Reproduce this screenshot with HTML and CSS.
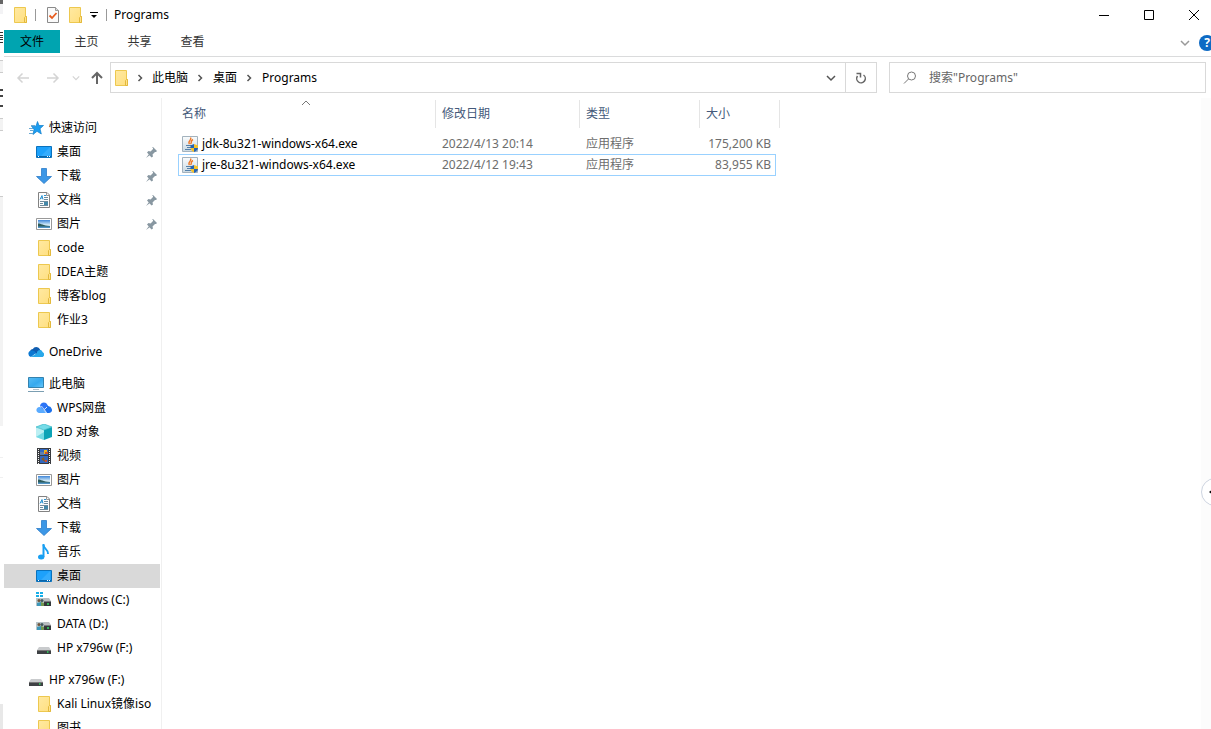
FILE: index.html
```html
<!DOCTYPE html>
<html lang="zh-CN">
<head>
<meta charset="utf-8">
<title>Programs</title>
<link rel="stylesheet" href="styles.css">
</head>
<body>
<svg class="sprite" aria-hidden="true">
  <defs>
    <linearGradient id="g-folder" x1="0" y1="0" x2="1" y2="1"><stop offset="0" stop-color="#ffe9a2"/><stop offset="1" stop-color="#ffdf7f"/></linearGradient>
    <linearGradient id="g-sky" x1="0" y1="0" x2="0" y2="1"><stop offset="0" stop-color="#3f86d8"/><stop offset=".6" stop-color="#d5ecf8"/><stop offset="1" stop-color="#d5ecf8"/></linearGradient>
    <linearGradient id="g-screen" x1="0" y1="0" x2="1" y2="1"><stop offset="0" stop-color="#58bdf5"/><stop offset=".55" stop-color="#35a9ee"/><stop offset="1" stop-color="#67c8fb"/></linearGradient>
    <linearGradient id="g-tile" x1="0" y1="0" x2="0" y2="1"><stop offset="0" stop-color="#fafcfd"/><stop offset="1" stop-color="#c9d8e2"/></linearGradient>
  </defs>
  <symbol id="i-folder" viewBox="0 0 16 16">
    <path d="M2.500.5h11v9h1v6h-12z" fill="url(#g-folder)" stroke="#edc84f"/>
    <path d="M12.500 15.500v-5l1-1h1v6z" fill="#ffe28b" stroke="#e3b93d"/>
  </symbol>
  <symbol id="i-check" viewBox="0 0 16 16">
    <path d="M2.500.5h8l3 3v12h-11z" fill="#fafafa" stroke="#8a8a8a"/>
    <path d="M10.500.5v3h3" fill="#ddd" stroke="#999"/>
    <path d="M4.500 8.500l2.500 2.500 4.500-5" fill="none" stroke="#e75a1c" stroke-width="1.800"/>
  </symbol>
  <symbol id="i-star" viewBox="0 0 16 16">
    <path d="M9.500 1.500l1.500 4h4.500l-3.500 3.200 1.300 5.300-4.300-2.700L5 14.500l1-5.300-2.500-3H8z" fill="#1c9df0" stroke="#0f7ecb" stroke-width=".7"/>
    <path d="M3 5.500h4M1 8.500h4M2 10.500h3M1 13.500h4" stroke="#6aa9d2"/>
  </symbol>
  <symbol id="i-desktop" viewBox="0 0 16 16">
    <path d="M.5 2.500h15v11H.5z" fill="#1da1fb" stroke="#0a72bd"/>
    <path d="M5 12L14 3v9z" fill="#4bb8ff" opacity=".5"/>
    <path d="M1 12.500h14" stroke="#0a64a8"/>
    <path d="M2 12.500h1M11 12.500h1M13 12.500h1" stroke="#fff"/>
  </symbol>
  <symbol id="i-download" viewBox="0 0 16 16">
    <path d="M5.500.5h5v8h5L8 15.500.500 8.500h5z" fill="#3c97e6" stroke="#2c7cc9" stroke-width=".8"/>
  </symbol>
  <symbol id="i-doc" viewBox="0 0 16 16">
    <path d="M2.500.5h8.500l2.500 2.500v12.500h-11z" fill="#fdfdfd" stroke="#828282"/>
    <path d="M10.500.5v3h3" fill="none" stroke="#999"/>
    <path d="M8 5.500h4M8 7.500h4M4 9.500h8M4 11.500h3M4 13.500h8" stroke="#6f8b9c"/>
    <path d="M4 7.500l2-4 1 4M5 6h2M8 3.500h2" fill="none" stroke="#2a93d2"/>
    <path d="M8 10h4v3H8z" fill="#4388a9"/>
  </symbol>
  <symbol id="i-picture" viewBox="0 0 16 16">
    <path d="M.5 2.500h15v11H.5z" fill="#fff" stroke="#999"/>
    <path d="M2 4h12v8H2z" fill="url(#g-sky)"/>
    <path d="M2 7.500c3 0 5 2 12 2.500v1H2z" fill="#2d5c5c"/>
    <path d="M2 10.500h12V12H2z" fill="#4f93c5"/>
  </symbol>
  <symbol id="i-cloud" viewBox="0 0 16 16">
    <path d="M2 8c0-2 1.500-3 3-3 1-3 6-3 7.500 1.500L9 10z" fill="#0f5db0"/>
    <path d="M3 13a3.200 3.200 0 0 1 0-6.300C5 6 7 7 8 9z" fill="#0b78d2"/>
    <path d="M9 8c1-2 4.500-3 5.500 0 2.500 1 2 5-.5 5H3L9 9z" fill="#28a8ea"/>
  </symbol>
  <symbol id="i-pc" viewBox="0 0 16 16">
    <path d="M.5 1.500h15v10H.5z" fill="url(#g-screen)" stroke="#3482ae"/>
    <path d="M5 13.500h6" stroke="#b4c1c9"/><path d="M0 15.500h16" stroke="#7b9eb2"/>
  </symbol>
  <symbol id="i-wps" viewBox="0 0 16 16">
    <path d="M3 13C-1 12 0 7 3.500 7 6 7 7 9 10 13z" fill="#5aabff"/>
    <path d="M4 6.500c0-4.500 6-5.500 7.500-1.500L13 7l-5 3z" fill="#2c74f6"/>
    <path d="M8 10c2-4 6-5 7.500-1.500C17 11 15 13 13 13h-2z" fill="#1b70ec"/>
    <path d="M4.500 6.500c3 0 4 4 6 6" fill="none" stroke="#d9eaff"/>
    <path d="M8.500 9.500L11 7" stroke="#d9eaff"/>
  </symbol>
  <symbol id="i-cube" viewBox="0 0 16 16">
    <path d="M0 3l8-3 8 3-8 3z" fill="#76dce8"/><path d="M0 3l8 3v10l-8-3z" fill="#bceff3"/><path d="M8 6l8-3v10l-8 3z" fill="#0da3b6"/>
    <path d="M0 13l8-5v8z" fill="#73dae4"/>
    <path d="M0 3l8 3 8-3M0 3l8-3 8 3" fill="none" stroke="#39b8c5" stroke-width=".7"/>
  </symbol>
  <symbol id="i-video" viewBox="0 0 16 16">
    <path d="M1 0h14v16H1z" fill="#393b3f"/><path d="M4 1h8v6H4zM4 8h8v7H4z" fill="#3167c0"/>
    <path d="M4 4h4v3H4z" fill="#5e80ae"/><path d="M8 2h3v4H8z" fill="#e9b71d"/><path d="M5 11l3-2 1 5z" fill="#8b5c20"/><path d="M9 4h3v2H9zM9 12h2v2H9z" fill="#cb4e2e"/>
    <path d="M2.500 1v15M13.500 1v15" stroke="#f5f5f5" stroke-dasharray="1 1"/>
  </symbol>
  <symbol id="i-music" viewBox="0 0 16 16">
    <path d="M7.500 1c0 4 5 4 4.500 9" fill="none" stroke="#189ff2" stroke-width="2"/>
    <path d="M7.500 0v13" stroke="#189ff2" stroke-width="2"/><ellipse cx="5.200" cy="13" rx="3.200" ry="2.500" fill="#189ff2"/>
  </symbol>
  <symbol id="i-drive" viewBox="0 0 16 16">
    <path d="M3 7h10l2 3H1z" fill="#c9cbcd"/><path d="M1 10h14v4H1z" fill="#3e4144"/><path d="M1 10.500h14" stroke="#777"/><path d="M11 12h1.500" stroke="#32df62" stroke-width="1.500"/>
  </symbol>
  <symbol id="i-share-drive" viewBox="0 0 16 16">
    <path d="M6 6h7l2 3v5H8z" fill="#b9bcbf"/><path d="M8 9.500h7v4.500H8z" fill="#34383b"/><path d="M11 12h2" stroke="#32df62" stroke-width="1.500"/>
    <path d="M0 6h8v8H0z" fill="#b8c4c8"/><circle cx="3" cy="8.500" r="1.500" fill="#72563b"/><circle cx="6" cy="8.500" r="1.500" fill="#45585d"/><path d="M1 11l4-1v4H1z" fill="#3d97b9"/><path d="M5 10l3 1v3H5z" fill="#73984e"/>
  </symbol>
  <symbol id="i-windows-drive" viewBox="0 0 16 16">
    <use href="#i-share-drive" width="16" height="16"/><path d="M0 0h3v2H0zM4 0h3v2H4zM0 3h3v2H0zM4 3h3v2H4z" fill="#17aee7"/>
  </symbol>
  <symbol id="i-pin" viewBox="0 0 16 16">
    <path d="M9 3l4 4-1 1h-1l-2.500 2.500.5 2-1.500 1L3 8.500 4.500 7l2 .5L9 5V4l-1-.5zM5 10l1 1-4 3z" fill="#8897a1"/>
  </symbol>
  <symbol id="i-java" viewBox="0 0 16 16">
    <path d="M.5.5h15v15H.5z" fill="url(#g-tile)" stroke="#a3b2bd"/>
    <path d="M8.500 1.500C10.500 4 5 5 7.500 8M11 3.500C8 5 10.500 6 8.500 8" fill="none" stroke="#ee7a2b" stroke-width="1.400"/>
    <path d="M4 9.500h6M5 11.500h4M3 13.500h6" stroke="#5580a8"/>
    <path d="M12 8l4 1.500V12H12zM8.500 12H12v4C10 15 8.500 14 8.500 12z" fill="#f5c32c"/>
    <path d="M12 8v4H8.500V9.500zM12 12h4c0 2-2 3-4 4z" fill="#2463b4"/>
  </symbol>
  <symbol id="i-right" viewBox="0 0 8 8"><path d="M2.500 1l3 3-3 3" fill="none" stroke="currentColor" stroke-width="1.500"/></symbol>
  <symbol id="i-down" viewBox="0 0 10 10"><path d="M1 3l4 4 4-4" fill="none" stroke="currentColor" stroke-width="1.500"/></symbol>
</svg>

<div class="page">
  <div class="backdrop" aria-hidden="true"></div>
  <div class="window">
    <header class="titlebar">
      <svg class="icon"><use href="#i-folder"/></svg>
      <span class="rule"></span>
      <button class="tool" aria-label="属性"><svg class="icon"><use href="#i-check"/></svg></button>
      <button class="tool" aria-label="新建文件夹"><svg class="icon"><use href="#i-folder"/></svg></button>
      <button class="tool more" aria-label="自定义"><svg class="tiny" viewBox="0 0 8 8"><path d="M0 1.500h8" stroke="#000"/><path d="M1 4h6L4 7z"/></svg></button>
      <span class="rule"></span>
      <h1 class="title">Programs</h1>
      <div class="controls">
        <button aria-label="最小化"><svg viewBox="0 0 12 12"><path d="M1 6.500h10"/></svg></button>
        <button aria-label="最大化"><svg viewBox="0 0 12 12"><path d="M1.500 1.500h9v9h-9z"/></svg></button>
        <button aria-label="关闭"><svg viewBox="0 0 12 12"><path d="M1 1l10 10M11 1L1 11"/></svg></button>
      </div>
    </header>

    <nav class="ribbon">
      <button class="tab file">文件</button>
      <button class="tab">主页</button>
      <button class="tab">共享</button>
      <button class="tab">查看</button>
      <div class="ribbon-end">
        <button class="expand" aria-label="展开功能区"><svg class="small"><use href="#i-down"/></svg></button>
        <button class="help" aria-label="帮助">?</button>
      </div>
    </nav>

    <div class="toolbar">
      <div class="history">
        <button aria-label="后退"><svg class="arrow" viewBox="0 0 14 14"><path d="M13 7H2M6.500 2.500L2 7l4.500 4.500"/></svg></button>
        <button aria-label="前进"><svg class="arrow" viewBox="0 0 14 14"><path d="M1 7h11M7.500 2.500L12 7l-4.500 4.500"/></svg></button>
        <button class="recent" aria-label="最近浏览的位置"><svg class="tiny"><use href="#i-down"/></svg></button>
        <button class="up" aria-label="上移"><svg class="arrow" viewBox="0 0 14 14"><path d="M7 13V2M2 7l5-5 5 5"/></svg></button>
      </div>
      <div class="address">
        <svg class="icon"><use href="#i-folder"/></svg>
        <svg class="tiny sep"><use href="#i-right"/></svg>
        <button class="crumb">此电脑</button>
        <svg class="tiny sep"><use href="#i-right"/></svg>
        <button class="crumb">桌面</button>
        <svg class="tiny sep"><use href="#i-right"/></svg>
        <button class="crumb">Programs</button>
        <button class="drop" aria-label="以前的位置"><svg class="small"><use href="#i-down"/></svg></button>
        <button class="refresh" aria-label="刷新"><svg class="arrow" viewBox="0 0 14 14"><path d="M3.500 5A4.300 4.300 0 1 0 9.500 4M2.500 2.500h4v4"/></svg></button>
      </div>
      <label class="search">
        <svg class="arrow" viewBox="0 0 14 14"><circle cx="8.500" cy="5" r="4"/><path d="M5.500 8L1 12.500"/></svg>
        <input type="text" placeholder='搜索"Programs"' aria-label="搜索">
      </label>
    </div>

    <div class="body">
      <nav class="sidebar">
        <ul class="tree">
          <li><a class="root" href="#"><svg class="icon"><use href="#i-star"/></svg>快速访问</a></li>
          <li><a href="#"><svg class="icon"><use href="#i-desktop"/></svg>桌面<svg class="pin"><use href="#i-pin"/></svg></a></li>
          <li><a href="#"><svg class="icon"><use href="#i-download"/></svg>下载<svg class="pin"><use href="#i-pin"/></svg></a></li>
          <li><a href="#"><svg class="icon"><use href="#i-doc"/></svg>文档<svg class="pin"><use href="#i-pin"/></svg></a></li>
          <li><a href="#"><svg class="icon"><use href="#i-picture"/></svg>图片<svg class="pin"><use href="#i-pin"/></svg></a></li>
          <li><a href="#"><svg class="icon"><use href="#i-folder"/></svg>code</a></li>
          <li><a href="#"><svg class="icon"><use href="#i-folder"/></svg>IDEA主题</a></li>
          <li><a href="#"><svg class="icon"><use href="#i-folder"/></svg>博客blog</a></li>
          <li><a href="#"><svg class="icon"><use href="#i-folder"/></svg>作业3</a></li>
        </ul>
        <ul class="tree">
          <li><a class="root" href="#"><svg class="icon"><use href="#i-cloud"/></svg>OneDrive</a></li>
        </ul>
        <ul class="tree">
          <li><a class="root" href="#"><svg class="icon"><use href="#i-pc"/></svg>此电脑</a></li>
          <li><a href="#"><svg class="icon"><use href="#i-wps"/></svg>WPS网盘</a></li>
          <li><a href="#"><svg class="icon"><use href="#i-cube"/></svg>3D 对象</a></li>
          <li><a href="#"><svg class="icon"><use href="#i-video"/></svg>视频</a></li>
          <li><a href="#"><svg class="icon"><use href="#i-picture"/></svg>图片</a></li>
          <li><a href="#"><svg class="icon"><use href="#i-doc"/></svg>文档</a></li>
          <li><a href="#"><svg class="icon"><use href="#i-download"/></svg>下载</a></li>
          <li><a href="#"><svg class="icon"><use href="#i-music"/></svg>音乐</a></li>
          <li><a class="current" href="#"><svg class="icon"><use href="#i-desktop"/></svg>桌面</a></li>
          <li><a href="#"><svg class="icon"><use href="#i-windows-drive"/></svg>Windows (C:)</a></li>
          <li><a href="#"><svg class="icon"><use href="#i-share-drive"/></svg>DATA (D:)</a></li>
          <li><a href="#"><svg class="icon"><use href="#i-drive"/></svg>HP x796w (F:)</a></li>
        </ul>
        <ul class="tree">
          <li><a class="root" href="#"><svg class="icon"><use href="#i-drive"/></svg>HP x796w (F:)</a></li>
          <li><a href="#"><svg class="icon"><use href="#i-folder"/></svg>Kali Linux镜像iso</a></li>
          <li><a href="#"><svg class="icon"><use href="#i-folder"/></svg>图书</a></li>
        </ul>
      </nav>

      <main class="content">
        <table class="files">
          <thead>
            <tr>
              <th class="name">名称<svg class="sort" viewBox="0 0 10 6"><path d="M1 5l4-4 4 4"/></svg></th>
              <th class="date">修改日期</th>
              <th class="type">类型</th>
              <th class="size">大小</th>
            </tr>
          </thead>
          <tbody>
            <tr>
              <td><span class="file-name"><svg class="icon"><use href="#i-java"/></svg>jdk-8u321-windows-x64.exe</span></td>
              <td>2022/4/13 20:14</td><td>应用程序</td><td class="num">175,200 KB</td>
            </tr>
            <tr class="focused">
              <td><span class="file-name"><svg class="icon"><use href="#i-java"/></svg>jre-8u321-windows-x64.exe</span></td>
              <td>2022/4/12 19:43</td><td>应用程序</td><td class="num">83,955 KB</td>
            </tr>
          </tbody>
        </table>
      </main>
      <aside class="edge"><button class="handle" aria-label="展开面板"><svg class="tiny" viewBox="0 0 8 8"><path d="M5 1v6L1 4z"/></svg></button></aside>
    </div>
  </div>
</div>
</body>
</html>
```

FILE: styles.css
```css
* { box-sizing: border-box; }

body {
  margin: 0;
  background: #fff;
  color: #000;
  font: 12px/16px "Noto Sans", "Noto Sans CJK SC", sans-serif;
}

button {
  margin: 0;
  padding: 0;
  border: 0;
  background: none;
  color: inherit;
  font: inherit;
  display: flex;
  align-items: center;
  justify-content: center;
}

.sprite { position: absolute; width: 0; height: 0; }
.icon { width: 16px; height: 16px; flex: none; display: block; }
.tiny { width: 8px; height: 8px; flex: none; }
.small { width: 10px; height: 10px; flex: none; }
.arrow { width: 14px; height: 14px; flex: none; fill: none; stroke: currentColor; stroke-width: 1.5; }

.page { display: flex; height: 100vh; overflow: hidden; }

/* Sliver of the window behind */
.backdrop {
  flex: none;
  width: 3px;
  margin-right: 1px;
  background: linear-gradient(
    #666 0 4px, #f3f3f5 4px 14px, #fff 14px 32px,
    #333 32px 33px, #fff 33px 35px, #333 35px 36px, #fff 36px 37px, #333 37px 38px,
    #fff 38px 39px, #333 39px 40px, #fff 40px 42px, #333 42px 43px, #fff 43px 60px,
    #ccc 60px 61px, #f3f3f3 61px 72px, #ccc 72px 73px, #fff 73px 89px,
    #444 89px 91px, #fff 91px 95px, #444 95px 97px, #fff 97px 105px, #444 105px 107px, #fff 107px 118px,
    #ccc 118px 119px, #f3f3f3 119px 130px, #ccc 130px 131px, #fff 131px 196px,
    #ccc 196px 197px, #f3f3f3 197px 426px, #fff 426px 457px, #f0f0f0 457px 458px, #fff 458px 477px,
    #f0f0f0 477px 478px, #fff 478px 704px, #e8e8e8 704px);
}
.window { flex: 1; min-width: 0; display: flex; flex-direction: column; }

.titlebar { flex: none; height: 30px; display: flex; align-items: center; padding-left: 8px; }
.rule { width: 1px; height: 12px; margin: 0 9px 0 7px; background: #999; }
.tool { margin-right: 6px; }
.tool.more { margin: 0 1px; }
.title { margin: 0; font-size: 12px; font-weight: 400; }
.titlebar .rule + .title { margin-left: -2px; }
.controls { margin-left: auto; display: flex; }
.controls button { width: 45px; height: 30px; }
.controls svg { width: 12px; height: 12px; fill: none; stroke: #000; }
.controls button:last-child { width: 46px; margin-right: -6px; }

.ribbon { flex: none; height: 27px; display: flex; border-bottom: 1px solid #dadbdc; overflow: hidden; }
.tab { width: 53px; height: 24px; color: #333; }
.tab.file { width: 56px; height: 23px; background: #00a4b0; color: #000; }
.ribbon-end { margin-left: auto; display: flex; align-items: center; gap: 9px; }
.expand { color: #999; }
.help { width: 16px; height: 16px; margin-right: -4px; border-radius: 50%; background: #0e6ac4; color: #fff; font-weight: 700; }

.toolbar { flex: none; display: flex; padding: 5px 5px 5px 0; }
.history { width: 106px; display: flex; align-items: center; color: #d4d4d4; padding-left: 12px; gap: 16px; }
.history .recent { margin: 0 -6px 0 -4px; }
.history .up { color: #666; }
.history .up .arrow { stroke-width: 2; }
.address { flex: 1; height: 31px; display: flex; align-items: center; padding-left: 2px; border: 1px solid #d9d9d9; }
.sep { margin: 0 8px 0 7px; color: #555; }
.crumb + .sep { margin: 0 9px 0 8px; }
.drop { margin-left: auto; width: 28px; height: 29px; color: #555; }
.refresh { width: 31px; height: 29px; border-left: 1px solid #d9d9d9; color: #666; }
.search { flex: 0 1 317px; height: 31px; margin-left: 12px; padding-left: 13px; display: flex; align-items: center; gap: 12px; border: 1px solid #d9d9d9; color: #777; }
.search .arrow { stroke-width: 1; }
.search input { flex: 1; min-width: 0; padding: 0; border: 0; outline: 0; background: none; font: inherit; color: #555; }
.search input::placeholder { color: #666; opacity: 1; }

.body { flex: 1; min-height: 0; display: flex; overflow: hidden; }
.sidebar { flex: none; width: 158px; padding-top: 18px; border-right: 1px solid #f0f0f0; overflow: hidden; }
.tree { list-style: none; margin: 0 0 8px; padding: 0; }
.tree a { height: 24px; margin-right: 1px; padding-left: 32px; display: flex; align-items: center; gap: 5px; color: #000; text-decoration: none; white-space: nowrap; }
.tree a.root { padding-left: 24px; }
.tree a.current { background: #d9d9d9; }
.pin { width: 16px; height: 16px; margin-left: auto; }

.content { flex: 1; min-width: 0; padding: 2px 0 0 16px; }
.files { border-collapse: separate; border-spacing: 0; table-layout: fixed; width: 602px; }
.files th { height: 28px; padding: 0 0 0 6px; border-right: 1px solid #e5e5e5; color: #44597a; font-weight: 400; text-align: left; }
.files th.name { width: 258px; padding-left: 4px; position: relative; }
.date { width: 144px; }
.type { width: 120px; }
.sort { position: absolute; top: 0; left: 50%; width: 10px; height: 6px; margin-left: -6px; fill: none; stroke: #777; }
.files tbody::before { content: ""; display: block; height: 5px; }
.files td { height: 21px; padding: 0 0 0 6px; color: #6d6d6d; white-space: nowrap; }
.files td:first-child { padding-left: 4px; color: #000; }
.files td.num { padding-right: 9px; text-align: right; }
.file-name { display: flex; align-items: center; gap: 4px; }
.focused { position: relative; }
.focused td:last-child::after { content: ""; position: absolute; inset: 0 4px -1px 0; border: 1px solid #99d1ff; }

.edge { flex: none; width: 10px; padding-top: 156px; display: flex; align-items: center; background: #fcfcfc; overflow: hidden; }
.handle { flex: none; width: 28px; height: 28px; padding-left: 6px; justify-content: flex-start; border: 1px solid #cdd4e0; border-radius: 50%; background: #fff; }
```
